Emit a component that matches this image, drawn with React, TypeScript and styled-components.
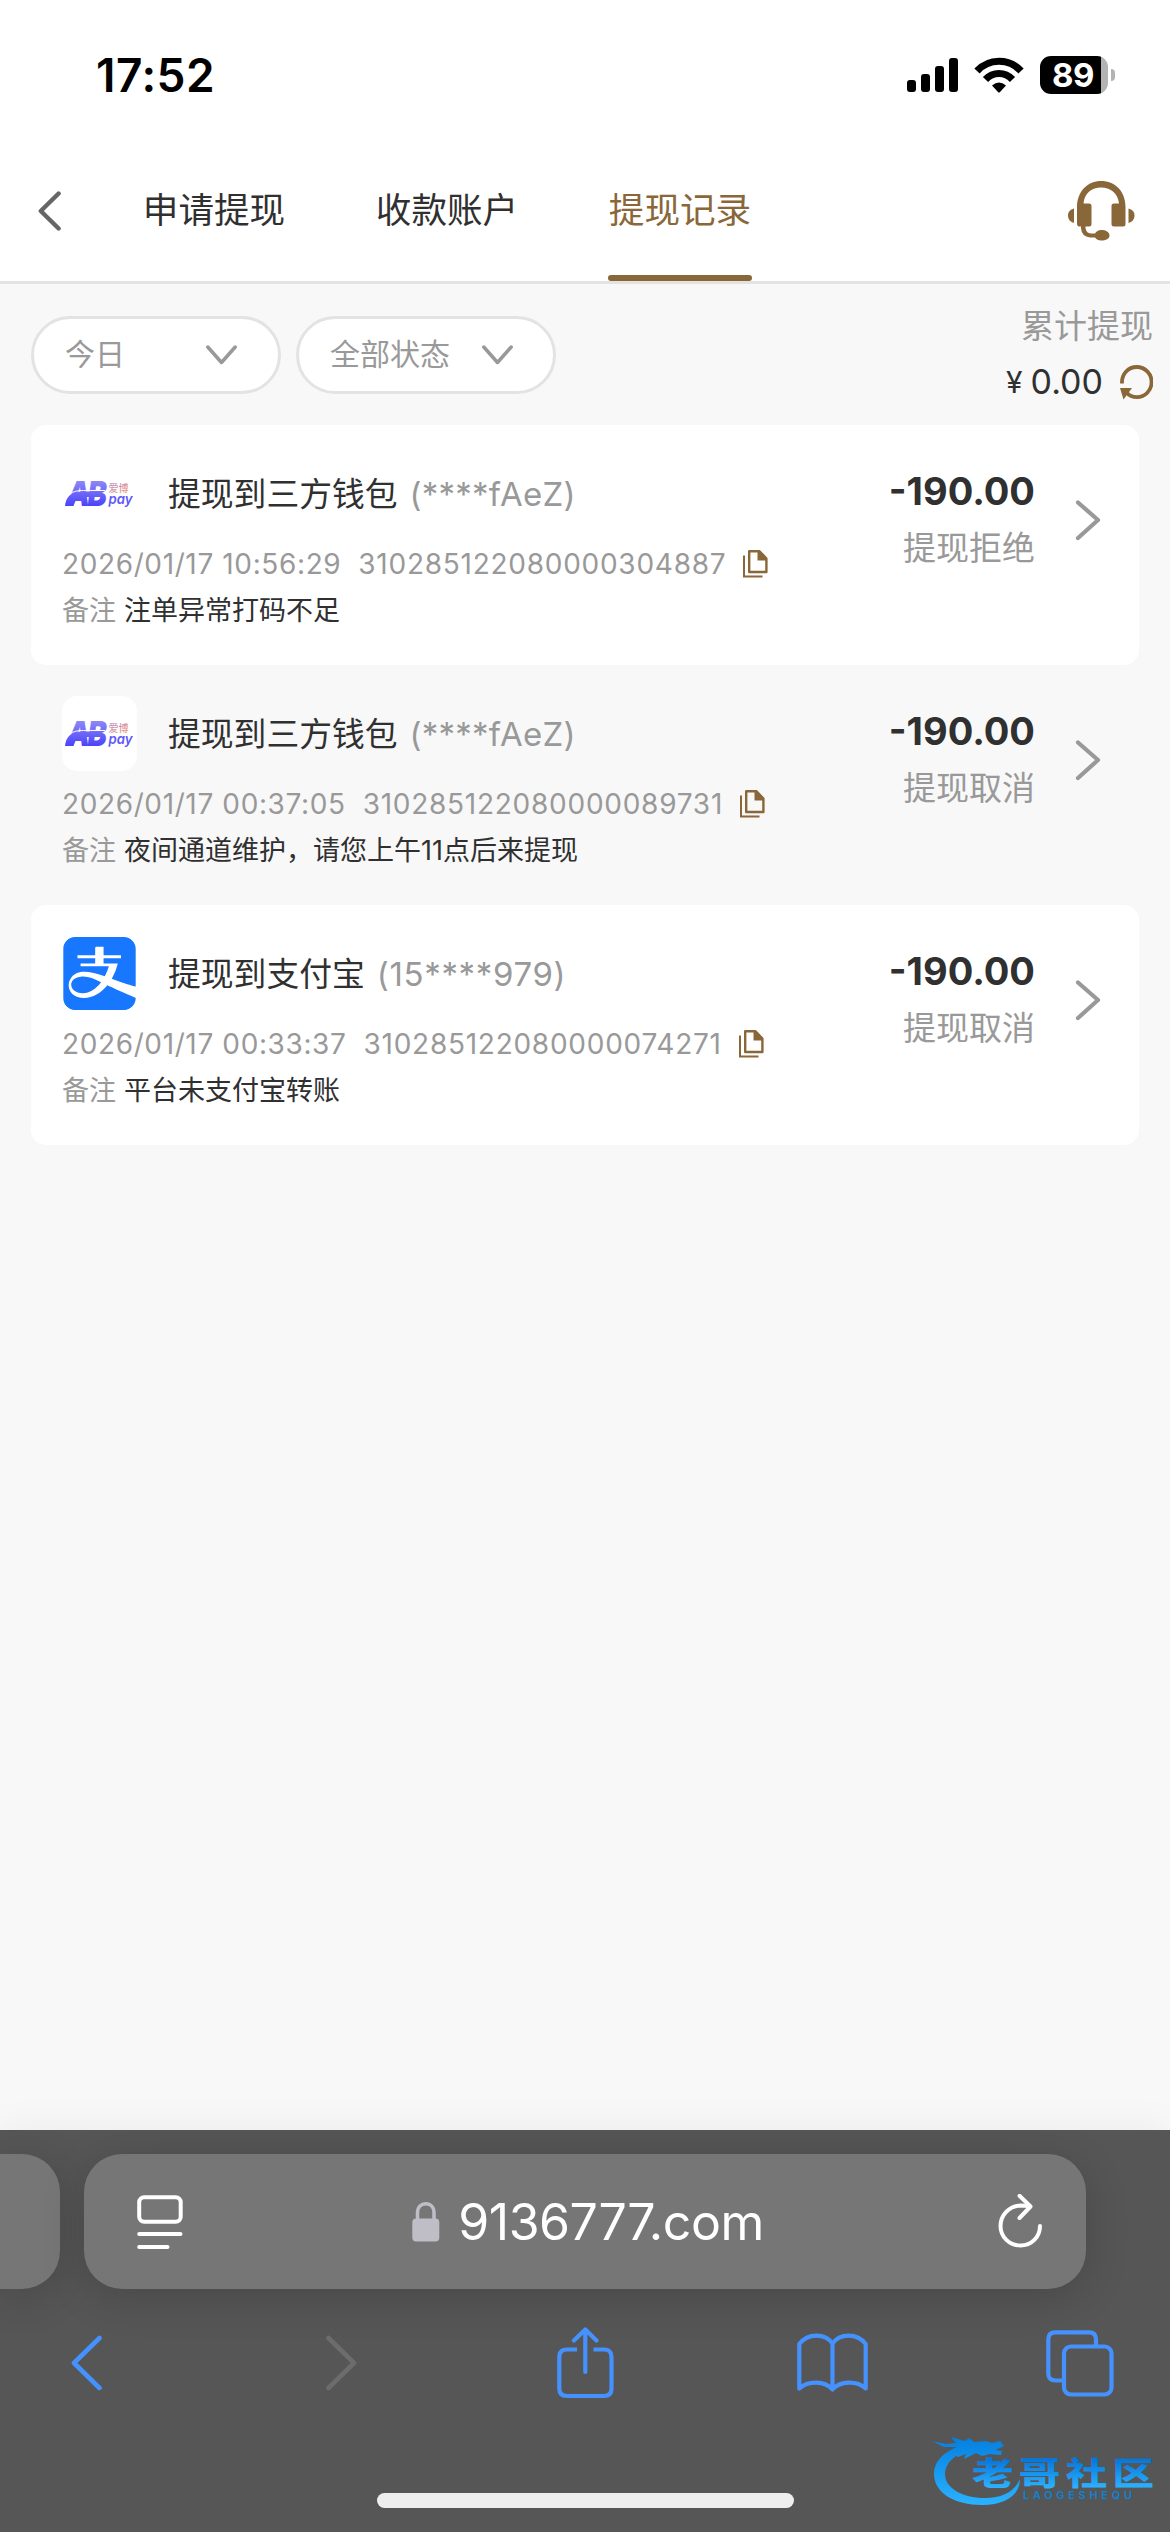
import React from 'react';
import styled, { createGlobalStyle } from 'styled-components';
import { SiAlipay } from 'react-icons/si';

const gold = '#896739';
const grey = '#999999';
const ink = '#303030';
const blue = '#4592ff';

const GlobalStyle = createGlobalStyle`
  * { box-sizing: border-box; }
  body {
    margin: 0;
    background: #f8f8f8;
    font-family: Inter, "Noto Sans CJK SC", sans-serif;
    color: ${ink};
  }
  svg { display: block; flex: none; }
`;

const Page = styled.div`
  position: relative;
  width: 1170px;
  height: 2532px;
  display: flex;
  flex-direction: column;
  overflow: hidden;
  background: #f8f8f8;
`;

const StatusBar = styled.header`
  height: 141px;
  padding: 8px 55px 0 96px;
  display: flex;
  align-items: center;
  justify-content: space-between;
  background: #fff;
  color: #000;
`;

const Clock = styled.span`
  font-size: 46px;
  font-weight: 600;
  line-height: 60px;
  letter-spacing: 0.5px;
`;

const StatusIcons = styled.div`
  display: flex;
  align-items: center;
  gap: 16px;
`;

const Battery = styled.div`
  display: flex;
  align-items: center;
  gap: 3px;
`;

const BatteryBody = styled.div`
  width: 68px;
  height: 38px;
  padding-right: 2px;
  border-radius: 11px;
  background: linear-gradient(to right, #000 61px, #b3b3b3 61px);
  display: flex;
  align-items: center;
  justify-content: center;
  font-size: 33px;
  font-weight: 700;
  line-height: 38px;
  letter-spacing: -0.5px;
  color: #fff;
`;

const BatteryTip = styled.div`
  width: 4px;
  height: 12px;
  border-radius: 0 4px 4px 0;
  background: #b3b3b3;
`;

const NavBar = styled.nav`
  height: 143px;
  padding: 0 35px 0 38px;
  display: flex;
  align-items: center;
  background: #fff;
  border-bottom: 3px solid #e3e3e3;
`;

const Tabs = styled.div`
  display: flex;
  align-self: stretch;
  gap: 89px;
  margin-left: 80px;
  flex: 1;
`;

const Tab = styled.button<{ $active?: boolean }>`
  position: relative;
  width: 144px;
  padding: 0;
  border: 0;
  background: none;
  display: flex;
  align-items: center;
  justify-content: center;
  font: inherit;
  font-size: 35.6px;
  line-height: 50px;
  white-space: nowrap;
  color: ${p => (p.$active ? gold : ink)};

  &::after {
    content: '';
    display: ${p => (p.$active ? 'block' : 'none')};
    position: absolute;
    left: 0;
    right: 0;
    bottom: 0;
    height: 6px;
    border-radius: 3px;
    background: ${gold};
  }
`;

const Filters = styled.section`
  height: 141px;
  padding: 22px 17px 0 31px;
  display: flex;
  align-items: flex-start;
`;

const Select = styled.button<{ $width: number; $padRight: number }>`
  width: ${p => p.$width}px;
  height: 78px;
  margin: 10px 15px 0 0;
  padding: 0 ${p => p.$padRight}px 0 31px;
  border: 3px solid #e3e3e3;
  border-radius: 39px;
  background: #fff;
  display: flex;
  align-items: center;
  justify-content: space-between;
  font: inherit;
  font-size: 30px;
  color: ${grey};
`;

const SelectText = styled.span`
  line-height: 40px;
  padding-bottom: 3px;
`;

const Summary = styled.div`
  margin-left: auto;
  display: flex;
  flex-direction: column;
  align-items: flex-end;
  gap: 16px;
  line-height: 40px;
`;

const SummaryLabel = styled.span`
  font-size: 33px;
  color: ${grey};
`;

const SummaryValue = styled.div`
  display: flex;
  align-items: center;
  font-size: 34px;
`;

const Yen = styled.span`
  font-size: 30px;
  margin-right: 8px;
`;

const Total = styled.span`
  margin-right: 17px;
`;

const Records = styled.main`
  flex: 1;
  padding: 0 31px;
`;

const Card = styled.article<{ $plain?: boolean }>`
  height: 240px;
  padding: 31px 38px 0 31px;
  border-radius: 15px;
  background: ${p => (p.$plain ? 'transparent' : '#fff')};
  display: flex;
  align-items: flex-start;
`;

const Details = styled.div`
  flex: 1;
  min-width: 0;
  white-space: nowrap;
`;

const Head = styled.div`
  height: 75px;
  display: flex;
  align-items: center;
`;

const Logo = styled.div`
  width: 75px;
  height: 75px;
  margin-right: 31px;
  border-radius: 15px;
  background: #fff;
  overflow: hidden;
  display: flex;
  align-items: center;
  justify-content: center;
`;

const Title = styled.h2`
  margin: 0 12px 0 0;
  font-size: 32.8px;
  font-weight: 400;
  line-height: 48px;
`;

const Account = styled.span<{ $spacing: number }>`
  font-size: 33px;
  line-height: 48px;
  letter-spacing: ${p => p.$spacing}px;
  color: ${grey};
`;

const Meta = styled.div`
  height: 44px;
  margin-top: 11px;
  display: flex;
  align-items: center;
  font-size: 28px;
  line-height: 44px;
  color: ${grey};
`;

const Stamp = styled.time`
  margin-right: 17px;
  letter-spacing: 0.62px;
`;

const OrderNo = styled.span`
  margin-right: 17px;
  letter-spacing: 0.74px;
`;

const Note = styled.p`
  margin: 3px 0 0;
  display: flex;
  gap: 8px;
  font-size: 27px;
  line-height: 44px;
`;

const NoteLabel = styled.span`
  color: ${grey};
`;

const Result = styled.div`
  padding-top: 13px;
  margin-right: 40px;
  text-align: right;
  line-height: 44px;
`;

const Amount = styled.div`
  font-size: 38px;
  font-weight: 700;
`;

const State = styled.div`
  margin-top: 13px;
  font-size: 33px;
  color: ${grey};
`;

const Arrow = styled.div`
  padding-top: 44px;
`;

const Browser = styled.footer`
  height: 402px;
  padding-top: 24px;
  background: #565656;
  box-shadow: 0 0 40px rgba(0, 0, 0, 0.06);
  display: flex;
  flex-direction: column;
  align-items: center;
  overflow: hidden;
`;

const AddressRow = styled.div`
  width: 1170px;
  display: flex;
  gap: 24px;
`;

const SideTab = styled.div`
  width: 60px;
  height: 135px;
  border-radius: 0 38px 38px 0;
  background: #767676;
  box-shadow: 0 8px 44px rgba(0, 0, 0, 0.16);
`;

const AddressBar = styled.div`
  width: 1002px;
  height: 135px;
  padding: 0 43px 0 53px;
  border-radius: 38px;
  background: #767676;
  box-shadow: 0 8px 44px rgba(0, 0, 0, 0.16);
  display: flex;
  align-items: center;
  justify-content: space-between;
  color: #fff;
`;

const Address = styled.div`
  display: flex;
  align-items: center;
  gap: 18px;
  margin-right: 5px;
  font-size: 50px;
  line-height: 70px;
  letter-spacing: -0.45px;
`;

const Toolbar = styled.div`
  width: 1170px;
  height: 148px;
  padding-left: 71px;
  display: flex;
  align-items: center;
`;

const Tool = styled.div<{ $before?: number }>`
  margin-left: ${p => p.$before ?? 0}px;
`;

const HomeIndicator = styled.div`
  width: 417px;
  height: 15px;
  margin-top: 56px;
  border-radius: 8px;
  background: #eeeeee;
`;

const Watermark = styled.div`
  position: absolute;
  left: 910px;
  top: 2420px;
`;

const SignalIcon = () => (
  <svg width="51" height="34" viewBox="0 0 51 34" fill="#000">
    <rect x="0" y="22" width="9" height="12" rx="3" />
    <rect x="14" y="16" width="9" height="18" rx="3" />
    <rect x="28" y="8" width="9" height="26" rx="3" />
    <rect x="42" y="0" width="9" height="34" rx="3" />
  </svg>
);

const WifiIcon = () => (
  <svg width="50" height="36" viewBox="0 0 50 36" fill="none" stroke="#000" strokeWidth="7.2">
    <path d="M3 14 C15 1 35 1 47 14" />
    <path d="M11.5 22.5 C19 14.5 31 14.5 38.5 22.5" />
    <path d="M18 28.5 Q25 22.5 32 28.5 L26 35 Q25 36 24 35Z" fill="#000" stroke="none" />
  </svg>
);

const BackIcon = () => (
  <svg width="24" height="42" viewBox="0 0 24 42" fill="none" stroke="#666" strokeWidth="4.4" strokeLinecap="round" strokeLinejoin="round">
    <path d="M20.6 3.5 L2.8 21 L20.6 38.5" />
  </svg>
);

const HeadsetIcon = () => (
  <svg width="67" height="60" viewBox="0 0 67 60" fill={gold}>
    <path d="M9 26 C9 10 20 0 33 0 C47 0 57.500 10 57.500 26 V43 A2.500 2.500 0 0 1 55 45.500 H46 A2.500 2.500 0 0 1 43.500 43 V25 A2.500 2.500 0 0 1 46 22.500 H51 C50 12 42 6.500 33 6.500 C24 6.500 16.500 12 15.500 22.500 H21 A2.500 2.500 0 0 1 23.500 25 V43 A2.500 2.500 0 0 1 21 45.500 H17.500 V47 Q18 52 23 52.500 H27 Q29 49 33 49 C38 49 41.500 51 41.500 54.500 C41.500 58 38 59.500 33 59.500 Q29 59.500 27 56.500 H22 Q13.500 55.500 13 47 V45.500 H12 A2.500 2.500 0 0 1 9 43Z" />
    <path d="M6 27.500 V42 C2.500 41 0 38.500 0 34.500 S2.500 28.500 6 27.500Z" />
    <path d="M60.500 27.500 V42 C64 41 66.500 38.500 66.500 34.500 S64 28.500 60.500 27.500Z" />
  </svg>
);

const DownIcon = () => (
  <svg width="31" height="20" viewBox="0 0 31 20" fill="none" stroke={grey} strokeWidth="3.5" strokeLinecap="round" strokeLinejoin="round">
    <path d="M1.800 2 L15.500 17.500 L29.200 2" />
  </svg>
);

const RefreshIcon = () => (
  <svg width="33" height="35" viewBox="0 0 33 35" fill="none" stroke={gold} strokeWidth="3.800">
    <path d="M2 18.500 C1.500 9 8 2 16.800 2 C25 2 31.600 8.800 31.600 17 C31.600 25.500 25 32.200 17 32.200 C12.500 32.200 9 30.500 6.500 27.500" />
    <path d="M0 23 H12 L3.500 34.500Z" fill={gold} stroke="none" />
  </svg>
);

const CopyIcon = () => (
  <svg width="25" height="28" viewBox="0 0 25 28" fill="none" stroke={gold}>
    <path d="M1 5.500 V26.400 H19.500" strokeWidth="2" />
    <path d="M6.200 1.200 H16.500 L23.400 8.500 V22 H6.200Z" strokeWidth="2.400" strokeLinejoin="round" />
    <path d="M14.500 1 H16.500 L24 8.500 V10.500 H14.500Z" fill={gold} stroke="none" />
  </svg>
);

const RightIcon = () => (
  <svg width="26" height="41" viewBox="0 0 26 41" fill="none" stroke={grey} strokeWidth="4.200" strokeLinecap="round" strokeLinejoin="round">
    <path d="M3 2.500 L23 20 L3 38" />
  </svg>
);

const AbPayLogo = () => (
  <svg width="75" height="75" viewBox="0 0 75 75">
    <defs>
      <linearGradient id="abViolet" gradientUnits="userSpaceOnUse" x1="0" y1="25" x2="0" y2="50">
        <stop offset="0" stopColor="#8e88f5" />
        <stop offset="1" stopColor="#4a43fb" />
      </linearGradient>
      <linearGradient id="abVioletText" x1="0" y1="0" x2="0" y2="1">
        <stop offset="0.2" stopColor="#8e88f5" />
        <stop offset="0.8" stopColor="#4a43fb" />
      </linearGradient>
      <linearGradient id="abRose" x1="0" y1="0" x2="1" y2="1">
        <stop offset="0" stopColor="#b48bd0" />
        <stop offset="1" stopColor="#f59a78" />
      </linearGradient>
    </defs>
    <text transform="translate(5 50) scale(0.84 1)" fontSize="34.500" fontWeight="900" fontStyle="italic" letterSpacing="-3" fill="url(#abVioletText)">AB</text>
    <path d="M3 50 C4 40 10 35.500 20 35.500 H38 V41 H23 C15 41 13 45 11.500 50Z" fill="url(#abViolet)" />
    <path d="M7 38.500 C12 34.700 17 34.500 24 34.500 H43" fill="none" stroke="#fff" strokeWidth="1" />
    <text x="46.500" y="36" fontSize="10" fontWeight="500" fill="url(#abRose)" fontFamily="Noto Sans CJK SC" textLength="20" lengthAdjust="spacingAndGlyphs">爱博</text>
    <text x="46.500" y="47.500" fontSize="14.500" fontWeight="600" fontStyle="italic" fill="#5f58f8" textLength="24" lengthAdjust="spacingAndGlyphs">pay</text>
  </svg>
);

const ReaderIcon = () => (
  <svg width="46" height="54" viewBox="0 0 46 54" fill="none" stroke="#fff" strokeWidth="4" strokeLinecap="round">
    <rect x="2.200" y="2.200" width="41.500" height="24.500" rx="5" />
    <path d="M2.200 39 H43.500 M2.200 52 H30.500" />
  </svg>
);

const LockIcon = () => (
  <svg width="28" height="40" viewBox="0 0 28 40">
    <path d="M5.500 18 V11 C5.500 5 9 1.800 13.700 1.800 C18.500 1.800 22 5 22 11 V18" fill="none" stroke="#bfbec6" strokeWidth="3.500" />
    <rect x="0.300" y="16.500" width="27" height="23" rx="4" fill="#bfbec6" />
  </svg>
);

const ReloadIcon = () => (
  <svg width="45" height="56" viewBox="0 0 45 56" fill="none" stroke="#fff" strokeWidth="4" strokeLinecap="round" strokeLinejoin="round">
    <path d="M42 32 C42 43 33.500 51.500 22.500 51.500 S2.500 43 2.500 32 S11 12 22.500 11.500 Q28 11.500 32 12.500" />
    <path d="M21.500 1.800 L32.500 12.500 L21.500 24" />
  </svg>
);

const ChevronIcon = ({ forward }: { forward?: boolean }) => (
  <svg width="31" height="56" viewBox="0 0 31 56" fill="none" stroke={forward ? '#6c6c6c' : blue} strokeWidth="4.600" strokeLinecap="round" strokeLinejoin="round">
    <path d={forward ? 'M2.500 3 L28 28 L2.500 53' : 'M28.500 3 L3 28 L28.500 53'} />
  </svg>
);

const ShareIcon = () => (
  <svg width="57" height="72" viewBox="0 0 57 72" fill="none" stroke={blue} strokeWidth="4.200" strokeLinecap="round" strokeLinejoin="round">
    <path d="M20 22.500 H10 Q2.300 22.500 2.300 30 V61.500 Q2.300 69 10 69 H47 Q54.500 69 54.500 61.500 V30 Q54.500 22.500 47 22.500 H36.500" strokeLinecap="butt" />
    <path d="M28.300 45 V3 M17 13.500 L28.300 2.500 L39.500 13.500" />
  </svg>
);

const BookIcon = () => (
  <svg width="71" height="60" viewBox="0 0 71 60" fill="none" stroke={blue} strokeWidth="4.200" strokeLinejoin="round">
    <path d="M35.500 56.500 C28 47.500 11 47.500 2.300 55.500 V11 C11 0 28 0 35.500 10.500 C43 0 60 0 68.700 11 V55.500 C60 47.500 43 47.500 35.500 56.500Z M35.500 10.500 V56.500" />
  </svg>
);

const PagesIcon = () => (
  <svg width="68" height="67" viewBox="0 0 68 67" fill="none" stroke={blue} strokeWidth="4.200">
    <path d="M50 16 V9.500 Q50 2.300 43 2.300 H9.500 Q2.300 2.300 2.300 9.500 V43.500 Q2.300 50.500 9.500 50.500 H16" />
    <rect x="18" y="16.500" width="47.500" height="48" rx="7" />
  </svg>
);

const DragonMark = () => (
  <svg width="260" height="112" viewBox="0 0 260 112">
    <defs>
      <linearGradient id="ring" gradientUnits="userSpaceOnUse" x1="0" y1="18" x2="0" y2="86">
        <stop offset="0" stopColor="#0580e0" />
        <stop offset="1" stopColor="#2bb3ff" />
      </linearGradient>
      <linearGradient id="word" gradientUnits="userSpaceOnUse" x1="0" y1="2" x2="0" y2="30">
        <stop offset="0" stopColor="#0578dc" />
        <stop offset="1" stopColor="#2cb2ff" />
      </linearGradient>
    </defs>
    <g fill="url(#ring)">
      <path d="M50 26 C30 33 24 44 24 54 C24 73 45 85 72 85 C95 85 110 75 110 59 C104 72 92 78 75 78 C52 78 35 68 35 54 C35 44 43 36 55 32Z" />
      <path d="M22 21 L36 24 L46 23 L41 17 L55 21 L59 18 L64 22 L76 21 L82 23 L90 21 L94 26 L85 30 L92 31 L91 35 L80 34 L72 36 L66 33 L54 39 L56 34 L48 37 L42 32 L48 27 L34 27Z" />
    </g>
    <g transform="translate(62 38) scale(1.32 1)" fill="url(#word)">
      <text x="0" y="27" fontFamily="Noto Sans CJK SC" fontSize="31.500" fontWeight="900" textLength="138">老哥社区</text>
    </g>
    <text x="113" y="79" fontSize="11" fontWeight="600" fill="#0e82d8" textLength="109">LAOGESHEQU</text>
  </svg>
);

interface Entry {
  wallet: 'abpay' | 'alipay';
  title: string;
  account: string;
  spacing: number;
  time: string;
  order: string;
  note: string;
  state: string;
}

const entries: Entry[] = [
  { wallet: 'abpay', title: '提现到三方钱包', account: '(****fAeZ)', spacing: 0.2, time: '2026/01/17 10:56:29', order: '310285122080000304887', note: '注单异常打码不足', state: '提现拒绝' },
  { wallet: 'abpay', title: '提现到三方钱包', account: '(****fAeZ)', spacing: 0.2, time: '2026/01/17 00:37:05', order: '310285122080000089731', note: '夜间通道维护，请您上午11点后来提现', state: '提现取消' },
  { wallet: 'alipay', title: '提现到支付宝', account: '(15****979)', spacing: 0.65, time: '2026/01/17 00:33:37', order: '310285122080000074271', note: '平台未支付宝转账', state: '提现取消' },
];

export default function App() {
  return (
    <>
      <GlobalStyle />
      <Page>
        <StatusBar>
          <Clock>17:52</Clock>
          <StatusIcons>
            <SignalIcon />
            <WifiIcon />
            <Battery>
              <BatteryBody><span>89</span></BatteryBody>
              <BatteryTip />
            </Battery>
          </StatusIcons>
        </StatusBar>
        <NavBar>
          <BackIcon />
          <Tabs>
            <Tab>申请提现</Tab>
            <Tab>收款账户</Tab>
            <Tab $active>提现记录</Tab>
          </Tabs>
          <HeadsetIcon />
        </NavBar>
        <Filters>
          <Select $width={250} $padRight={41}><SelectText>今日</SelectText><DownIcon /></Select>
          <Select $width={260} $padRight={40}><SelectText>全部状态</SelectText><DownIcon /></Select>
          <Summary>
            <SummaryLabel>累计提现</SummaryLabel>
            <SummaryValue>
              <Yen>¥</Yen>
              <Total>0.00</Total>
              <RefreshIcon />
            </SummaryValue>
          </Summary>
        </Filters>
        <Records>
          {entries.map((e, i) => (
            <Card key={e.order} $plain={i % 2 === 1}>
              <Details>
                <Head>
                  <Logo>{e.wallet === 'abpay' ? <AbPayLogo /> : <SiAlipay size={73} color="#1777ff" />}</Logo>
                  <Title>{e.title}</Title>
                  <Account $spacing={e.spacing}>{e.account}</Account>
                </Head>
                <Meta>
                  <Stamp>{e.time}</Stamp>
                  <OrderNo>{e.order}</OrderNo>
                  <CopyIcon />
                </Meta>
                <Note>
                  <NoteLabel>备注</NoteLabel>
                  <span>{e.note}</span>
                </Note>
              </Details>
              <Result>
                <Amount>-190.00</Amount>
                <State>{e.state}</State>
              </Result>
              <Arrow><RightIcon /></Arrow>
            </Card>
          ))}
        </Records>
        <Browser>
          <AddressRow>
            <SideTab />
            <AddressBar>
              <ReaderIcon />
              <Address>
                <LockIcon />
                9136777.com
              </Address>
              <ReloadIcon />
            </AddressBar>
          </AddressRow>
          <Toolbar>
            <Tool><ChevronIcon /></Tool>
            <Tool $before={224}><ChevronIcon forward /></Tool>
            <Tool $before={200}><ShareIcon /></Tool>
            <Tool $before={183}><BookIcon /></Tool>
            <Tool $before={178}><PagesIcon /></Tool>
          </Toolbar>
          <HomeIndicator />
        </Browser>
        <Watermark><DragonMark /></Watermark>
      </Page>
    </>
  );
}
